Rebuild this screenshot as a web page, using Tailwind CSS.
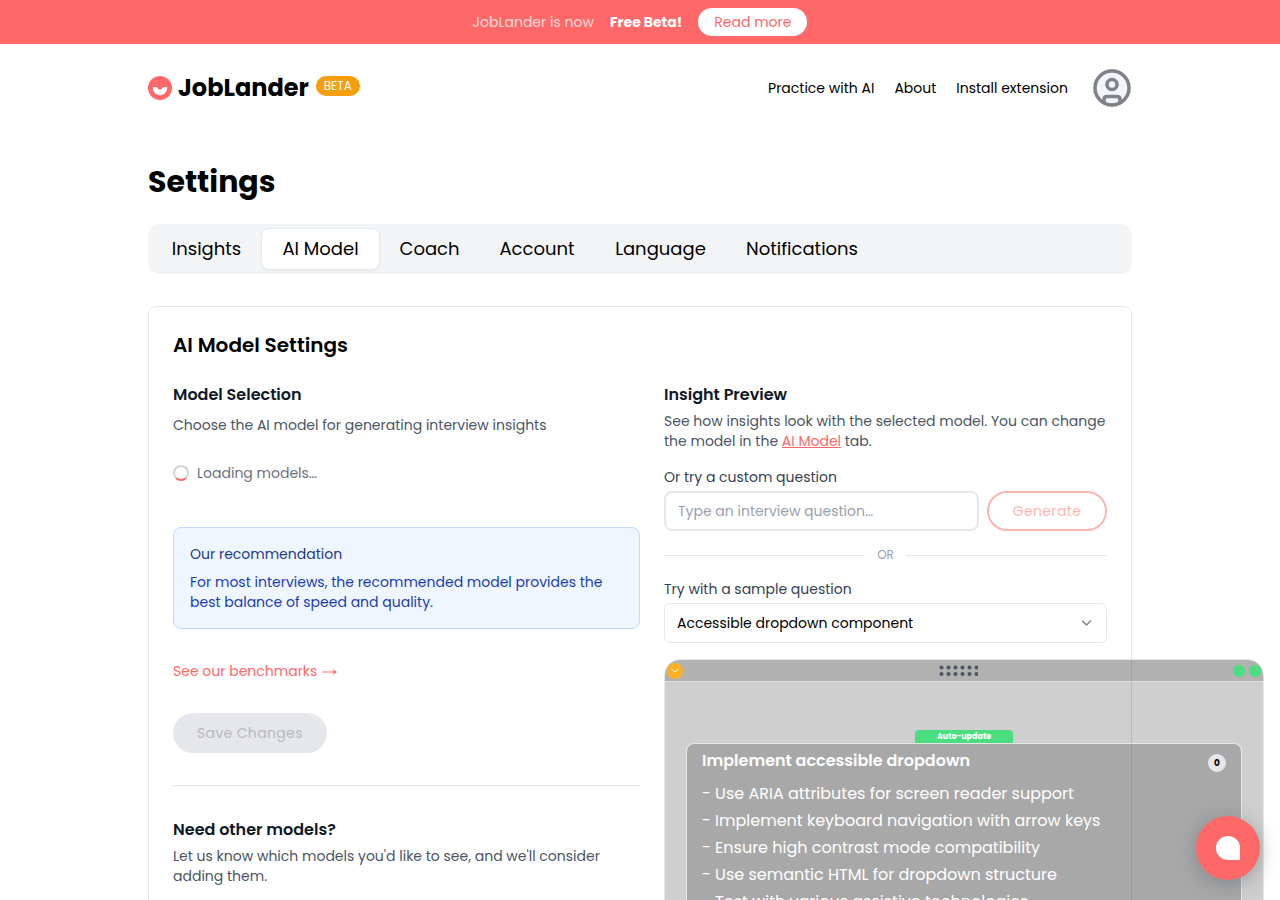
<!DOCTYPE html>
<html lang="en">
<head>
  <meta charset="UTF-8">
  <meta name="viewport" content="width=device-width, initial-scale=1.0">
  <title>Settings - JobLander</title>
  <script src="https://cdn.jsdelivr.net/npm/@tailwindcss/browser@4"></script>
</head>
<body class="bg-white text-black font-[Poppins,Inter,sans-serif] text-[14px] leading-5 overflow-x-hidden">

  <!-- Announcement -->
  <div class="bg-[#ff6868] text-white min-h-11 flex items-center justify-center gap-4">
    <span class="text-white/75">JobLander is now</span>
    <strong class="font-bold">Free Beta!</strong>
    <a href="#" class="bg-white text-[#ff6868] rounded-full px-4 py-1">Read more</a>
  </div>

  <header class="max-w-5xl mx-auto px-5 h-22 flex items-center justify-between">
    <a href="#" class="flex items-center">
      <svg class="w-6 h-6 mr-1.5" viewBox="0 0 24 24" aria-hidden="true">
        <circle cx="12" cy="12" r="12" fill="#ff6868"/>
        <path d="M4.800 11h3.700c.8 0 .9 2.500 3.500 2.500s2.700-2.500 3.500-2.500h3.700c0 4.800-3 8.200-7.200 8.200S4.800 15.800 4.800 11z" fill="#fff"/>
      </svg>
      <span class="text-[24px] leading-8 font-bold">JobLander</span>
      <span class="bg-[#f59e0b] text-white text-[12px] leading-5 rounded-full px-2 ml-[7px] mb-1">BETA</span>
    </a>
    <nav class="flex items-center gap-5">
      <a href="#">Practice with AI</a>
      <a href="#">About</a>
      <a href="#">Install extension</a>
      <button type="button" aria-label="Profile" class="ml-1">
        <svg class="w-10 h-10" viewBox="0 0 40 40" fill="none" stroke="#808287" stroke-width="3.500">
          <circle cx="20" cy="20" r="17" fill="#f1f5f9"/>
          <circle cx="20" cy="16.500" r="5"/>
          <path d="M12 34v-2.500q0-3 3-3h10q3 0 3 3V34"/>
        </svg>
      </button>
    </nav>
  </header>

  <main class="max-w-5xl mx-auto px-5 pt-7 pb-12">
    <h1 class="text-[30px] leading-11 font-bold">Settings</h1>

    <div role="tablist" class="mt-5 bg-gray-100 rounded-xl p-1 h-[50px] flex text-[18px]">
      <button type="button" role="tab" class="w-[109px]">Insights</button>
      <button type="button" role="tab" aria-selected="true" class="w-[119px] bg-white border border-slate-200 rounded-lg shadow-xs">AI Model</button>
      <button type="button" role="tab" class="w-[99px]">Coach</button>
      <button type="button" role="tab" class="w-[116px]">Account</button>
      <button type="button" role="tab" class="w-[131px]">Language</button>
      <button type="button" role="tab" class="w-[152px]">Notifications</button>
    </div>

    <section class="mt-8 border border-gray-200 rounded-lg p-6">
      <h2 class="text-[20px] leading-7 font-semibold">AI Model Settings</h2>

      <div class="mt-6 grid grid-cols-[467fr_443fr] gap-6">
        <div class="min-w-0">
          <h3 class="text-[16px] leading-6 font-semibold text-gray-900">Model Selection</h3>
          <p class="mt-2 text-gray-600">Choose the AI model for generating interview insights</p>

          <div class="mt-7 flex items-center gap-2 text-gray-500">
            <span class="w-4 h-4 rounded-full border-2 border-neutral-300 border-b-[#ff6868]"></span>
            Loading models…
          </div>

          <div class="mt-11 bg-blue-50 border border-blue-200 rounded-lg p-4 text-blue-800">
            <h4 class="text-blue-900">Our recommendation</h4>
            <p class="mt-2">For most interviews, the recommended model provides the best balance of speed and quality.</p>
          </div>

          <a href="#" class="mt-8 flex items-center gap-1 text-[#ff6868]">
            See our benchmarks
            <svg class="w-4 h-2 mt-0.5" viewBox="0 0 16 8" fill="none" aria-hidden="true">
              <path d="M1 4h12" stroke="#ff6868"/>
              <path d="M12 1l4 3-4 3 1-3z" fill="#ff6868"/>
            </svg>
          </a>

          <button type="button" disabled class="mt-8 h-10 px-6 rounded-full bg-gray-200 text-[#b8babd] tracking-wide">Save Changes</button>

          <hr class="mt-8 border-gray-200">

          <h3 class="mt-8 text-[16px] leading-6 font-semibold text-gray-900">Need other models?</h3>
          <p class="mt-1 text-gray-600">Let us know which models you'd like to see, and we'll consider adding them.</p>
        </div>

        <div class="min-w-0">
          <h3 class="text-[16px] leading-6 font-semibold text-gray-900">Insight Preview</h3>
          <p class="mt-1 text-gray-600">See how insights look with the selected model. You can change the model in the <a href="#" class="text-[#ff6868] underline">AI Model</a> tab.</p>

          <label for="question" class="block mt-4 text-gray-700">Or try a custom question</label>
          <div class="mt-1 flex gap-2">
            <input id="question" type="text" placeholder="Type an interview question…" class="min-w-0 flex-1 h-10 px-3 rounded-lg border-2 border-gray-200 placeholder:text-gray-400">
            <button type="button" disabled class="w-[120px] h-10 rounded-full border-2 border-[#ffb4b4] text-[#ffb4b4] tracking-wide">Generate</button>
          </div>

          <div class="mt-4 flex items-center gap-3 text-[12px] leading-4 text-gray-400">
            <span class="flex-1 border-t border-gray-200"></span>
            OR
            <span class="flex-1 border-t border-gray-200"></span>
          </div>

          <label for="sample" class="block mt-4 text-gray-700">Try with a sample question</label>
          <div class="relative mt-1">
            <select id="sample" class="appearance-none w-full h-10 px-3 rounded-md border border-slate-200 bg-white">
              <option>Accessible dropdown component</option>
            </select>
            <svg class="absolute right-3 top-3 w-4 h-4 pointer-events-none" viewBox="0 0 16 16" fill="none" stroke="#808287" stroke-width="1.500" stroke-linecap="round" stroke-linejoin="round">
              <path d="M3.500 6l4 4 4-4"/>
            </svg>
          </div>

          <!-- Insight window preview, wider than its column -->
          <div class="mt-4 w-[600px] rounded-t-2xl border border-gray-200 bg-black/19 bg-clip-padding overflow-hidden text-white">
            <div class="h-[22px] bg-black/14 border-b border-white/60 flex items-center justify-between px-0.5">
              <svg class="w-4 h-4" viewBox="0 0 16 16" fill="none">
                <circle cx="8" cy="8" r="8" fill="#fdb022"/>
                <path d="M4.500 6L8 9l3.500-3" stroke="#fff" stroke-linecap="round" stroke-linejoin="round"/>
              </svg>
              <svg class="w-10 h-3" viewBox="0 0 40 12" fill="none" stroke="#4b5563" stroke-width="4" stroke-linecap="round" stroke-dasharray="0 7">
                <path d="M3.500 2.500h36M3.500 9h36"/>
              </svg>
              <div class="flex gap-1">
                <span class="w-3 h-3 rounded-full bg-[#4ade80]"></span>
                <span class="w-3 h-3 rounded-full bg-[#4ade80]"></span>
              </div>
            </div>
            <div class="pt-12 px-[21px]">
              <div class="w-[98px] mx-auto bg-[#4ade80] rounded-t-sm text-center text-[8px] leading-[13px] font-bold">Auto-update</div>
              <div class="bg-black/19 bg-clip-padding border border-white/50 rounded-t-lg px-[15px] pt-[5px] pb-12">
                <div class="flex justify-between">
                  <h4 class="text-[16px] leading-6 font-semibold">Implement accessible dropdown</h4>
                  <span class="mt-[5px] w-[18px] h-[18px] rounded-full bg-gray-200 text-black text-[9px] leading-[18px] font-bold text-center">0</span>
                </div>
                <ul class="mt-[7px] text-[16px] leading-[27px]">
                  <li>- Use ARIA attributes for screen reader support</li>
                  <li>- Implement keyboard navigation with arrow keys</li>
                  <li>- Ensure high contrast mode compatibility</li>
                  <li>- Use semantic HTML for dropdown structure</li>
                  <li>- Test with various assistive technologies</li>
                </ul>
              </div>
            </div>
          </div>
        </div>
      </div>
    </section>
  </main>

  <button type="button" aria-label="Open chat" class="fixed right-5 bottom-5 w-16 h-16 rounded-full bg-[#ff6868] shadow-[0_4px_20px_rgba(75,85,99,0.4)] flex items-center justify-center">
    <span class="w-6 h-6 bg-white rounded-full rounded-br-none"></span>
  </button>
</body>
</html>
